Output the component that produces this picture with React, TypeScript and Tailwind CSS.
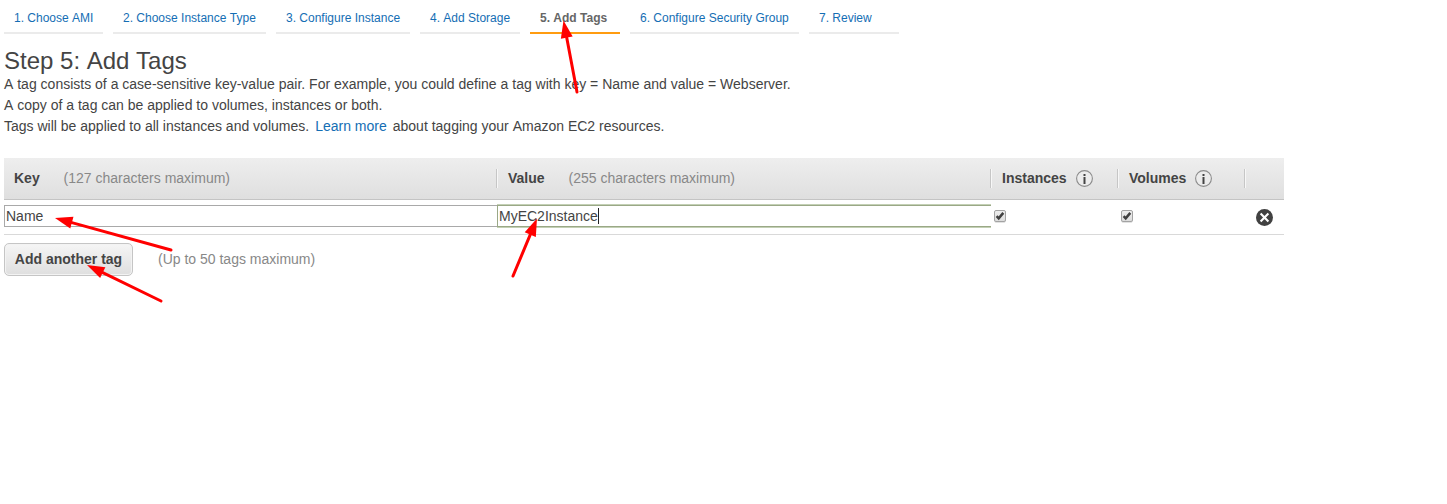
import React from "react";

const tabs = [
  { label: "1. Choose AMI", width: "w-[99px]" },
  { label: "2. Choose Instance Type", width: "w-[153px]" },
  { label: "3. Configure Instance", width: "w-[134px]" },
  { label: "4. Add Storage", width: "w-[100px]" },
  { label: "5. Add Tags", width: "w-[90px]", active: true },
  { label: "6. Configure Security Group", width: "w-[169px]" },
  { label: "7. Review", width: "w-[90px]" },
];

// Words are separate inline blocks so that no kerning is applied across spaces.
function Words({ text }: { text: string }) {
  return (
    <>
      {text.split(" ").map((word, i) => (
        <React.Fragment key={i}>
          {i > 0 && <span className="inline-block whitespace-pre"> </span>}
          <span className="inline-block">{word}</span>
        </React.Fragment>
      ))}
    </>
  );
}

function InfoIcon() {
  return (
    <svg width="17" height="17" viewBox="0 0 17 17" className="shrink-0">
      <circle cx="8.5" cy="8.5" r="7.9" fill="#ececec" stroke="#8c8c8c" strokeWidth="1.1" />
      <rect x="7.5" y="4" width="2" height="2" fill="#444" />
      <rect x="7.5" y="7" width="2" height="7" fill="#444" />
    </svg>
  );
}

function RemoveIcon() {
  return (
    <svg width="17" height="17" viewBox="0 0 17 17">
      <circle cx="8.5" cy="8.5" r="8.5" fill="#414141" />
      <path d="M4.6 4.6L12.4 12.4M12.4 4.6L4.6 12.4" stroke="#fff" strokeWidth="2.1" />
    </svg>
  );
}

function CheckBox() {
  return (
    <svg width="12" height="13" viewBox="0 0 12 13">
      <defs>
        <linearGradient id="box" x1="0" y1="0" x2="0" y2="1">
          <stop offset="0" stopColor="#eeeeee" />
          <stop offset="1" stopColor="#dcdcdc" />
        </linearGradient>
      </defs>
      <rect x="0.5" y="1" width="11" height="11.5" rx="1.5" fill="none" stroke="#e2e2e2" />
      <rect x="0.5" y="0.5" width="11" height="11" rx="1.5" fill="url(#box)" stroke="#a3a3a3" />
      <path d="M2.6 6.2L4.7 8.4L9.3 2.9" fill="none" stroke="#404040" strokeWidth="2.5" />
    </svg>
  );
}

function Separator() {
  return <span className="h-[19px] w-[2px] shrink-0 border-r border-l border-l-[#c6c6c6] border-r-[#f7f7f7]" />;
}

function Arrow({ x1, y1, x2, y2 }: { x1: number; y1: number; x2: number; y2: number }) {
  const length = Math.hypot(x2 - x1, y2 - y1);
  const ux = (x2 - x1) / length;
  const uy = (y2 - y1) / length;
  const bx = x2 - ux * 17.5;
  const by = y2 - uy * 17.5;
  const half = 6;
  return (
    <g fill="#f00" stroke="#f00">
      <line x1={x1} y1={y1} x2={bx} y2={by} strokeWidth="3" strokeLinecap="round" />
      <polygon
        stroke="none"
        points={`${x2},${y2} ${bx - uy * half},${by + ux * half} ${bx + uy * half},${by - ux * half}`}
      />
    </g>
  );
}

export default function App() {
  return (
    <main className="relative h-[504px] w-[1447px] overflow-hidden bg-white pl-1 font-['Liberation_Sans',Arial,sans-serif] text-sm text-[#444]">
      <nav className="flex h-[34px] gap-[10px] text-xs">
        {tabs.map((tab) => (
          <a
            key={tab.label}
            className={`${tab.width} whitespace-nowrap border-b-2 pl-[10px] pt-[10px] ${
              tab.active ? "border-[#ff9c10] font-bold text-[#666]" : "border-[#ebebeb] text-[#146eb4]"
            }`}
          >
            <Words text={tab.label} />
          </a>
        ))}
      </nav>

      <h1 className="mt-[12px] h-[28px] text-2xl leading-[30px]"><Words text="Step 5: Add Tags" /></h1>
      <div className="leading-[21px]">
        <p><Words text="A tag consists of a case-sensitive key-value pair. For example, you could define a tag with key = Name and value = Webserver." /></p>
        <p><Words text="A copy of a tag can be applied to volumes, instances or both." /></p>
        <p>
          <Words text="Tags will be applied to all instances and volumes." />
          <a className="mx-[6px] text-[#146eb4]">Learn more</a>
          <Words text="about tagging your Amazon EC2 resources." />
        </p>
      </div>

      <section className="mt-[21px] w-[1280px]">
        <div className="flex h-[42px] items-center border-b border-[#c4c4c4] bg-linear-to-b from-[#eeeeee] to-[#dfdfdf] font-bold">
          <div className="flex w-[492px] pb-[2px] pl-[10px]">
            <span className="w-[49.5px]">Key</span>
            <span className="font-normal text-[#888]">(127 characters maximum)</span>
          </div>
          <Separator />
          <div className="flex w-[492px] pb-[2px] pl-[10px]">
            <span className="w-[60.5px]">Value</span>
            <span className="font-normal text-[#888]">(255 characters maximum)</span>
          </div>
          <Separator />
          <div className="flex w-[125px] items-center pl-[10px]">
            <span className="w-[74px] pb-[2px]">Instances</span>
            <InfoIcon />
          </div>
          <Separator />
          <div className="flex w-[125px] items-center pl-[10px]">
            <span className="w-[66px] pb-[2px]">Volumes</span>
            <InfoIcon />
          </div>
          <Separator />
        </div>

        <div className="flex h-[35px] items-start border-b border-[#d9d9d9] pt-[4px]">
          <div className="mt-px h-[22px] w-[493px] border border-r-0 border-[#a9a9a9] pl-px leading-[20px]">Name</div>
          <div className="h-[24px] w-[494px] border-y border-[#c3d0b5]">
            <div className="flex h-[22px] items-center border border-r-0 border-[#9aa886] pl-px leading-[20px]">
              MyEC2Instance
              <span className="h-[16px] w-px bg-[#222]" />
            </div>
          </div>
          <div className="w-[127px] pl-[3px] pt-[6px]"><CheckBox /></div>
          <div className="w-[127px] pl-[3px] pt-[6px]"><CheckBox /></div>
          <div className="pl-[11px] pt-[5px]"><RemoveIcon /></div>
        </div>

        <div className="mt-[8px] flex items-center">
          <button className="h-[33px] w-[129px] whitespace-nowrap rounded-[5px] border border-[#c5c5c5] bg-linear-to-b from-[#f5f5f5] to-[#dfdfdf] pb-[2px] font-bold shadow-[inset_0_0_0_1px_#f3f3f3]">
            Add another tag
          </button>
          <span className="ml-[25px] pb-[2px] text-[#888]">(Up to 50 tags maximum)</span>
        </div>
      </section>

      <svg className="pointer-events-none absolute left-0 top-0" width="1447" height="504">
        <Arrow x1={577} y1={92} x2={563.5} y2={20.5} />
        <Arrow x1={171} y1={250} x2={55} y2={218} />
        <Arrow x1={161} y1={301} x2={87} y2={265} />
        <Arrow x1={513} y1={276} x2={537} y2={218.5} />
      </svg>
    </main>
  );
}
